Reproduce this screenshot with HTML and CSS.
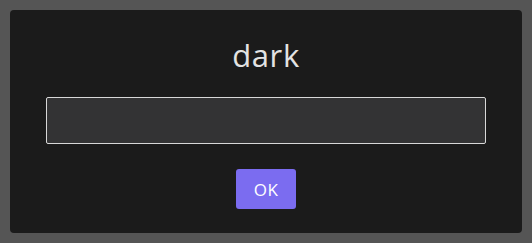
FILE: index.html
```html
<!DOCTYPE html>
<html>
<head>
<meta charset="utf-8">
<link rel="stylesheet" href="styles.css">
</head>
<body>
<div class="dialog">
  <h1 class="title">dark</h1>
  <input class="field" type="text">
  <button class="ok">OK</button>
</div>
</body>
</html>
```
FILE: styles.css
```css
html, body {
  margin: 0;
  padding: 0;
  background: #555555;
  height: 100%;
}
body {
  padding: 10px;
  box-sizing: border-box;
  font-family: "Open Sans", "Noto Sans", sans-serif;
}
.dialog {
  width: 512px;
  height: 223px;
  box-sizing: border-box;
  background: #1b1b1b;
  border-radius: 4px;
  padding: 0 36px;
  display: flex;
  flex-direction: column;
  align-items: center;
}
.title {
  margin: 0;
  margin-top: 27px;
  height: 36px;
  line-height: 36px;
  font-size: 31px;
  letter-spacing: 0.6px;
  font-weight: 400;
  color: #e3e3e3;
}
.field {
  margin-top: 24px;
  width: 440px;
  height: 47px;
  box-sizing: border-box;
  background: #333334;
  border: 1px solid #d8d8d8;
  border-radius: 2px;
  outline: none;
}
.ok {
  margin-top: 25px;
  width: 60px;
  height: 40px;
  border: none;
  border-radius: 3px;
  background: #7b6cf0;
  color: #ffffff;
  font-family: "Open Sans", "Noto Sans", sans-serif;
  font-size: 17px;
  letter-spacing: 0.5px;
  padding: 0;
}
```
